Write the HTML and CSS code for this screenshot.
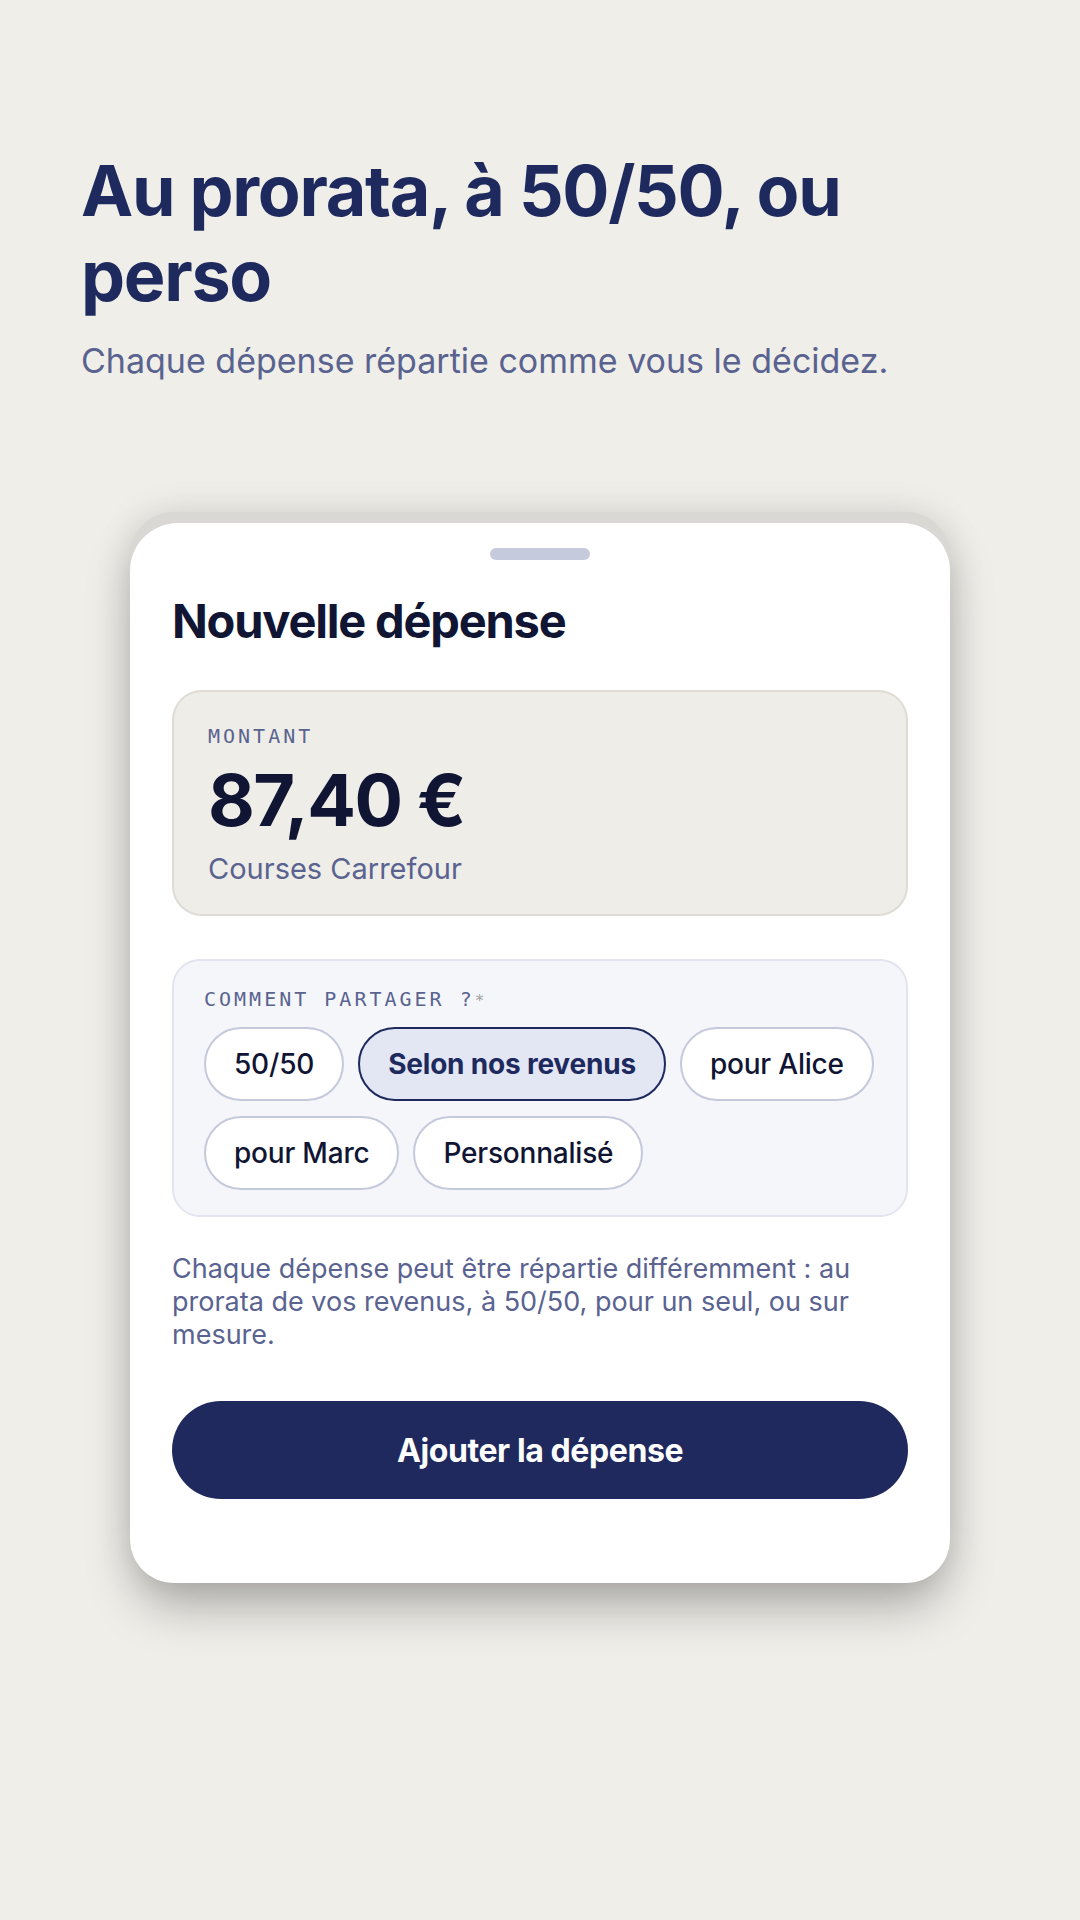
FILE: index.html
```html
<!DOCTYPE html>
<html lang="fr">
<head>
<meta charset="utf-8">
<title>Nouvelle dépense</title>
<link rel="stylesheet" href="styles.css">
</head>
<body>
<main class="page">
  <header class="hero">
    <h1 class="hero-title">Au prorata, à 50/50, ou perso</h1>
    <p class="hero-sub">Chaque dépense répartie comme vous le décidez.</p>
  </header>

  <section class="device">
    <div class="sheet">
      <div class="handle"></div>
      <h2 class="sheet-title">Nouvelle dépense</h2>

      <div class="amount-box">
        <div class="label">MONTANT</div>
        <div class="amount">87,40 €</div>
        <div class="amount-desc">Courses Carrefour</div>
      </div>

      <div class="share-box">
        <div class="label">COMMENT PARTAGER ?<span class="req">*</span></div>
        <div class="chips">
          <button class="chip">50/50</button>
          <button class="chip chip-active">Selon nos revenus</button>
          <button class="chip">pour Alice</button>
          <button class="chip">pour Marc</button>
          <button class="chip">Personnalisé</button>
        </div>
      </div>

      <p class="help">Chaque dépense peut être répartie différemment : au prorata de vos revenus, à 50/50, pour un seul, ou sur mesure.</p>

      <button class="primary">Ajouter la dépense</button>
    </div>
  </section>
</main>
</body>
</html>
```

FILE: styles.css
```css
* { box-sizing: border-box; }

html, body {
  margin: 0;
  padding: 0;
}

body {
  background: #efeee9;
  font-family: Inter, "Noto Sans", sans-serif;
  width: 1080px;
  min-height: 1920px;
}

.page {
  padding: 148px 0 0 81px;
}

.hero-title {
  margin: 0;
  font-size: 70px;
  line-height: 85px;
  font-weight: 700;
  letter-spacing: -1.3px;
  color: #1e2a5e;
  width: 840px;
}

.hero-sub {
  margin: 21px 0 0;
  font-size: 34px;
  line-height: 44px;
  font-weight: 400;
  color: #5a6390;
}

.device {
  margin: 129px 0 0 49px;
  width: 820px;
  background: #d9d8d4;
  border-radius: 44px;
  padding-top: 11px;
  overflow: hidden;
  box-shadow: 0 28px 50px -6px rgba(0, 0, 0, 0.28), 0 0 36px rgba(0, 0, 0, 0.10);
}

.sheet {
  background: #ffffff;
  border-radius: 48px 48px 0 0;
  padding: 25px 42px 84px;
}

.handle {
  width: 100px;
  height: 12px;
  border-radius: 6px;
  background: #c5cadc;
  margin: 0 auto;
}

.sheet-title {
  margin: 34px 0 0;
  font-size: 47px;
  line-height: 54px;
  font-weight: 700;
  letter-spacing: -1.2px;
  color: #0f1533;
}

.label {
  font-family: "DejaVu Sans Mono", "Liberation Mono", monospace;
  font-size: 20px;
  line-height: 24px;
  letter-spacing: 3px;
  color: #5a6390;
}

.req {
  color: #a0a0a0;
  letter-spacing: 0;
  font-size: 16px;
}

.amount-box {
  margin-top: 42px;
  background: #eeede8;
  border: 2px solid #dedcd5;
  border-radius: 30px;
  padding: 32px 34px 26px;
}

.amount {
  margin-top: 12px;
  font-size: 72px;
  line-height: 79px;
  font-weight: 700;
  letter-spacing: -1.5px;
  color: #0f1533;
}

.amount-desc {
  margin-top: 10px;
  font-size: 29px;
  line-height: 39px;
  color: #5a6390;
}

.share-box {
  margin-top: 43px;
  background: #f5f6fa;
  border: 2px solid #e3e5ee;
  border-radius: 28px;
  padding: 26px 30px 25px;
}

.chips {
  margin-top: 14px;
  display: flex;
  flex-wrap: wrap;
  gap: 15px 14px;
}

.chip {
  height: 74px;
  padding: 0 28px;
  border: 2px solid #c5c9dc;
  border-radius: 37px;
  background: #ffffff;
  font-family: Inter, "Noto Sans", sans-serif;
  font-size: 28px;
  font-weight: 500;
  color: #0f1533;
  letter-spacing: -0.2px;
}

.chip-active {
  background: #e3e7f3;
  border-color: #1e2a5e;
  color: #1e2a5e;
  font-weight: 700;
}

.help {
  margin: 35px 0 0;
  font-size: 27px;
  line-height: 33px;
  color: #5a6390;
}

.primary {
  display: block;
  width: 100%;
  height: 98px;
  margin-top: 50px;
  border: none;
  border-radius: 49px;
  background: #1f295e;
  color: #ffffff;
  font-family: Inter, "Noto Sans", sans-serif;
  font-size: 32px;
  font-weight: 700;
  letter-spacing: -0.4px;
}
```
